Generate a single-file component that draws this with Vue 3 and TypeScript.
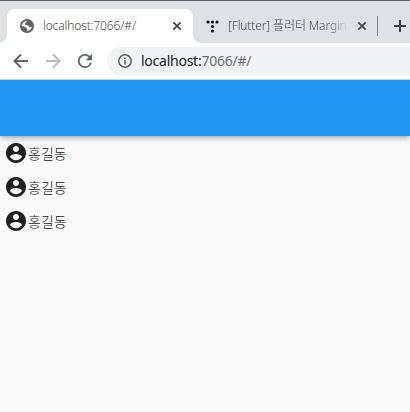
<script setup lang="ts">
interface Person {
  id: number
  name: string
}

const people: Person[] = [
  { id: 1, name: '홍길동' },
  { id: 2, name: '홍길동' },
  { id: 3, name: '홍길동' },
]
</script>

<template>
  <div class="window">
    <header class="tabs">
      <div class="tab active">
        <svg class="globe" viewBox="0 0 14 14">
          <circle cx="7" cy="7" r="7" />
          <path class="land" d="M7.300 2C5.600 2.300 6.400 3.800 5.200 4.300C4.100 4.800 4.900 5.900 6.200 6C8 6.100 8.800 6.500 8.900 7.500C9 8.500 10.300 8.200 11.900 7.800C11.600 9.900 9.700 11.800 7.200 12.100C7 10.800 7.700 10.300 6.600 9.600C5.400 8.900 5.700 8.100 4.700 7.800L1.900 7.100C1.800 4.300 4.200 1.800 7.300 2z" />
          <path d="M6.500 3.400L8.800 2.700 9.700 4.400 8.200 5.500 5.800 5.300z" />
        </svg>
        <span class="title">localhost:7066/#/</span>
        <svg class="close" viewBox="0 0 10 10"><path d="M1.300 1.300l7.400 7.400M8.700 1.300l-7.400 7.400" /></svg>
      </div>
      <div class="tab idle">
        <svg class="dots" viewBox="0 0 13 13">
          <circle cx="2" cy="2" r="1.6" /><circle cx="6.500" cy="2" r="1.6" /><circle cx="11" cy="2" r="1.6" />
          <circle cx="6.500" cy="6.500" r="1.6" /><circle cx="6.500" cy="11" r="1.6" />
        </svg>
        <span class="title fade">[Flutter] 플러터 Margin</span>
        <svg class="close" viewBox="0 0 10 10"><path d="M1.300 1.300l7.400 7.400M8.700 1.300l-7.400 7.400" /></svg>
      </div>
      <span class="divider"></span>
      <svg class="plus" viewBox="0 0 12 12"><path d="M6 0v12M0 6h12" /></svg>
    </header>
    <nav class="toolbar">
      <svg class="nav" viewBox="0 0 16 16"><path d="M15 8H2M8 1.500L1.500 8 8 14.500" /></svg>
      <svg class="nav disabled" viewBox="0 0 16 16"><path d="M1 8h13M8 1.500L14.500 8 8 14.500" /></svg>
      <svg class="reload" viewBox="4 4 16 16"><path d="M17.650 6.350A7.958 7.958 0 0 0 12 4c-4.420 0-7.990 3.580-7.990 8s3.570 8 7.990 8c3.730 0 6.840-2.550 7.730-6h-2.080A5.990 5.990 0 0 1 12 18c-3.310 0-6-2.690-6-6s2.690-6 6-6c1.660 0 3.140.69 4.220 1.780L13 11h7V4l-2.350 2.350z" /></svg>
      <div class="address">
        <svg class="info" viewBox="0 0 14 14"><circle cx="7" cy="7" r="6.200" /><path d="M7 6.200v4.300M7 3.500v1.500" /></svg>
        <span class="url">localhost:<i>7066/#/</i></span>
      </div>
    </nav>
    <div class="appbar"></div>
    <main class="list">
      <div v-for="person in people" :key="person.id" class="row">
        <svg class="avatar" viewBox="0 0 24 24"><path d="M12 2C6.480 2 2 6.480 2 12s4.480 10 10 10 10-4.480 10-10S17.520 2 12 2zm0 3c1.660 0 3 1.340 3 3s-1.340 3-3 3-3-1.340-3-3 1.340-3 3-3zm0 14.200c-2.500 0-4.710-1.280-6-3.220.03-1.990 4-3.080 6-3.080 1.990 0 5.970 1.090 6 3.080-1.290 1.940-3.500 3.220-6 3.220z" /></svg>
        <span class="name">{{ person.name }}</span>
      </div>
    </main>
  </div>
</template>

<style>
body {
  margin: 0;
  overflow: hidden;
}
</style>

<style scoped>
.window {
  width: 410px;
  height: 412px;
  display: flex;
  flex-direction: column;
  overflow: hidden;
  background: #fafafa;
  font-family: "Noto Sans", "Noto Sans CJK KR", sans-serif;
}
svg {
  display: block;
  flex: none;
}
.tabs {
  box-sizing: border-box;
  height: 43px;
  flex: none;
  display: flex;
  padding: 8px 0 0 7px;
  border-top: 1px solid #606266;
  background: #dee1e6;
}
.tab {
  box-sizing: border-box;
  height: 34px;
  flex: none;
  display: flex;
  align-items: center;
  font-size: 12px;
  color: #45494d;
}
.active {
  position: relative;
  width: 186px;
  padding-left: 13px;
  border-radius: 8px 8px 0 0;
  background: #fff;
}
.active::before,
.active::after {
  content: "";
  position: absolute;
  bottom: 0;
  width: 8px;
  height: 8px;
}
.active::before {
  right: 100%;
  background: radial-gradient(circle at 0 0, transparent 7.5px, #fff 8px);
}
.active::after {
  left: 100%;
  background: radial-gradient(circle at 100% 0, transparent 7.5px, #fff 8px);
}
.idle {
  width: 184px;
  padding-left: 13px;
}
.globe {
  width: 14px;
  height: 14px;
  fill: #5f6368;
}
.land {
  fill: #fff;
}
.dots {
  width: 13px;
  height: 13px;
  fill: #111;
}
.title {
  width: 121px;
  margin: 0 9px;
  overflow: hidden;
  white-space: nowrap;
  line-height: 18px;
  font-weight: 300;
  letter-spacing: -0.13px;
}
.fade {
  margin-right: 8px;
  -webkit-mask-image: linear-gradient(90deg, #000 98px, transparent 121px);
  mask-image: linear-gradient(90deg, #000 98px, transparent 121px);
}
.close {
  width: 10px;
  height: 10px;
  fill: none;
  stroke: #45494d;
  stroke-width: 1.8;
}
.active .close {
  margin-left: -1px;
}
.divider {
  width: 1px;
  height: 20px;
  margin-top: 7px;
  background: #85888d;
}
.plus {
  width: 12px;
  height: 12px;
  margin: 11px 0 0 16px;
  fill: none;
  stroke: #3c4043;
  stroke-width: 2;
}
.toolbar {
  box-sizing: border-box;
  height: 37px;
  flex: none;
  display: flex;
  align-items: center;
  padding-left: 13px;
  background: #fff;
  border-bottom: 1px solid #d5d7da;
}
.nav {
  width: 16px;
  height: 16px;
  margin-right: 16px;
  fill: none;
  stroke: #5f6368;
  stroke-width: 2;
}
.disabled {
  stroke: #babcbe;
}
.reload {
  width: 14px;
  height: 14px;
  margin-left: 1px;
  fill: #5f6368;
}
.address {
  height: 28px;
  flex: 1;
  display: flex;
  align-items: center;
  margin-left: 15px;
  padding-left: 11px;
  border-radius: 14px 0 0 14px;
  background: #f1f3f4;
}
.info {
  width: 14px;
  height: 14px;
  margin-right: 9px;
  fill: none;
  stroke: #5f6368;
  stroke-width: 1.5;
}
.url {
  font-size: 14px;
  line-height: 20px;
  letter-spacing: -0.25px;
  color: #202124;
}
.url i {
  font-style: normal;
  color: #6b6f74;
}
.appbar {
  height: 56px;
  flex: none;
  background: #2196f3;
  box-shadow: 0 2px 4px -1px rgba(0, 0, 0, 0.2), 0 4px 5px rgba(0, 0, 0, 0.1), 0 1px 8px rgba(0, 0, 0, 0.08);
  clip-path: inset(0 0 -20px 0);
}
.row {
  height: 34px;
  display: flex;
  align-items: center;
  padding-left: 4px;
}
.avatar {
  width: 24px;
  height: 24px;
  fill: #212121;
}
.name {
  font-family: "Noto Sans CJK KR", sans-serif;
  font-size: 14px;
  font-weight: 300;
  line-height: 20px;
  color: #212121;
}
</style>
